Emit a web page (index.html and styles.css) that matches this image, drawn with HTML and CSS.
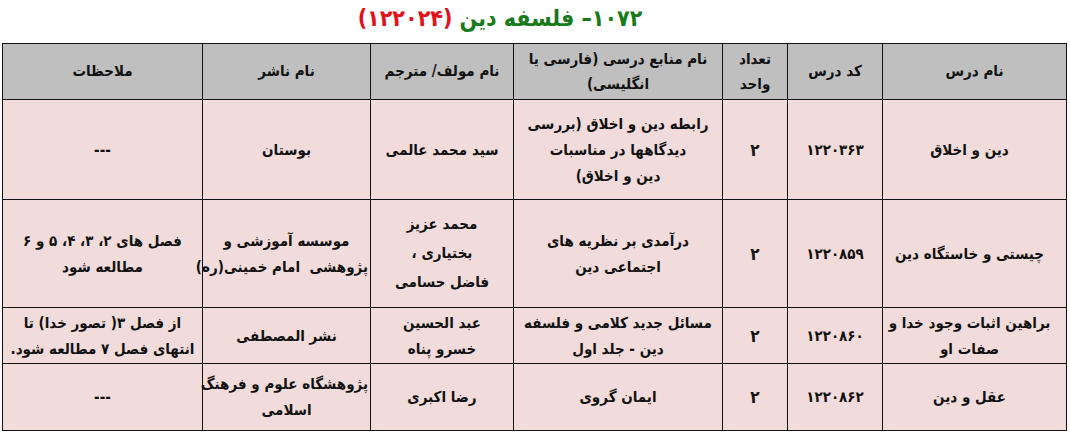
FILE: index.html
```html
<!DOCTYPE html>
<html lang="fa" dir="rtl">
<head>
<meta charset="utf-8">
<title>فلسفه دین</title>
<link rel="stylesheet" href="styles.css">
</head>
<body>
<div class="page">
  <h1 class="title"><span class="green">۱۰۷۲– فلسفه دین</span> <span class="red">(۱۲۲۰۲۴)</span></h1>
  <table class="courses">
    <colgroup>
      <col class="c-name">
      <col class="c-code">
      <col class="c-unit">
      <col class="c-src">
      <col class="c-auth">
      <col class="c-pub">
      <col class="c-note">
    </colgroup>
    <thead>
      <tr class="head">
        <th>نام درس</th>
        <th>کد درس</th>
        <th>تعداد<br>واحد</th>
        <th>نام منابع درسی (فارسی یا<br>انگلیسی)</th>
        <th>نام مولف/ مترجم</th>
        <th>نام ناشر</th>
        <th>ملاحظات</th>
      </tr>
    </thead>
    <tbody>
      <tr class="r1">
        <td class="name">دین و اخلاق</td>
        <td class="code">۱۲۲۰۳۶۳</td>
        <td class="unit">۲</td>
        <td>رابطه دین و اخلاق (بررسی<br>دیدگاهها در مناسبات<br>دین و اخلاق)</td>
        <td>سید محمد عالمی</td>
        <td>بوستان</td>
        <td>---</td>
      </tr>
      <tr class="r2">
        <td class="name">چیستی و خاستگاه دین</td>
        <td class="code">۱۲۲۰۸۵۹</td>
        <td class="unit">۲</td>
        <td>درآمدی بر نظریه های<br>اجتماعی دین</td>
        <td class="tall">محمد عزیز<br>بختیاری ،<br>فاضل حسامی</td>
        <td>موسسه آموزشی و<br>پژوهشی&nbsp; امام خمینی(ره)</td>
        <td>فصل های ۲، ۳، ۴، ۵ و ۶<br>مطالعه شود</td>
      </tr>
      <tr class="r3">
        <td class="name">براهین اثبات وجود خدا و<br>صفات او</td>
        <td class="code">۱۲۲۰۸۶۰</td>
        <td class="unit">۲</td>
        <td>مسائل جدید کلامی و فلسفه<br>دین - جلد اول</td>
        <td>عبد الحسین<br>خسرو پناه</td>
        <td>نشر المصطفی</td>
        <td>از فصل ۳( تصور خدا) تا<br>انتهای فصل ۷ مطالعه شود.</td>
      </tr>
      <tr class="r4">
        <td class="name">عقل و دین</td>
        <td class="code">۱۲۲۰۸۶۲</td>
        <td class="unit">۲</td>
        <td>ایمان گروی</td>
        <td>رضا اکبری</td>
        <td>پژوهشگاه علوم و فرهنگ<br>اسلامی</td>
        <td>---</td>
      </tr>
    </tbody>
  </table>
</div>
</body>
</html>
```
FILE: styles.css
```css
html, body {
  margin: 0;
  padding: 0;
  background: #ffffff;
}

.page {
  width: 1070px;
  padding: 0 3px;
  box-sizing: border-box;
  font-family: "DejaVu Sans Condensed", "DejaVu Sans", sans-serif;
  color: #111111;
}

.title {
  margin: 0;
  height: 43px;
  padding: 2px 70px 0 0;
  box-sizing: border-box;
  text-align: center;
  font-size: 23px;
  font-weight: bold;
  line-height: 32px;
}

.title .green { color: #177a1b; }
.title .red { color: #e3101a; }

.courses {
  width: 1064px;
  border-collapse: collapse;
  table-layout: fixed;
  direction: rtl;
}

.c-name { width: 184px; }
.c-code { width: 95px; }
.c-unit { width: 65px; }
.c-src { width: 209px; }
.c-auth { width: 143px; }
.c-pub { width: 168px; }
.c-note { width: 200px; }

.courses th,
.courses td {
  border: 1.5px solid #111111;
  text-align: center;
  vertical-align: middle;
  font-size: 15px;
  font-weight: bold;
  line-height: 26px;
  padding: 0 2px;
  white-space: nowrap;
  overflow: visible;
}

.courses th {
  background: #bfbfbf;
  line-height: 25px;
}

.courses td {
  background: #f2dcdb;
}

.head { height: 56px; }
.r1 { height: 100px; }
.r2 { height: 108px; }
.r3 { height: 56px; }
.r4 { height: 67px; }

.courses td.name {
  padding-right: 12px;
}

.courses td.code {
  font-size: 15px;
  letter-spacing: 1px;
}

.courses td.unit {
  font-size: 17px;
}

.courses td.tall {
  line-height: 29px;
}

.courses td.narrow {
  font-size: 14.5px;
}
```
